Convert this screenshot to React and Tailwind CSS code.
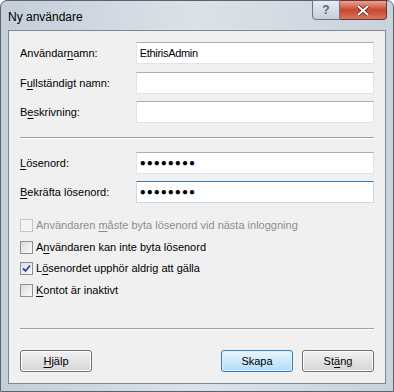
import React from "react";

const font = { fontFamily: '"Liberation Sans", Arial, sans-serif' };

function Label({ pre, u, post }) {
  return (
    <span>
      {pre}
      <span className="underline underline-offset-2">{u}</span>
      {post}
    </span>
  );
}

function TextBox({ value, focused, password }) {
  return (
    <div
      className={`w-[239px] h-[22px] bg-white border flex items-center px-[3px] ${
        focused
          ? "border-[#c5daed] border-t-[#3d7bad]"
          : "border-[#e2e3ea] border-t-[#abadb3]"
      }`}
    >
      {password ? (
        <span className="text-[10px] tracking-[1px] text-black leading-none">●●●●●●●●</span>
      ) : (
        <span className="text-[11px] text-black tracking-[-0.3px]">{value}</span>
      )}
    </div>
  );
}

function FieldRow({ label, className = "", ...rest }) {
  return (
    <div className={`flex items-center h-[22px] ${className}`}>
      <div className="w-[116px] text-[11px] text-black">{label}</div>
      <TextBox {...rest} />
    </div>
  );
}

function Checkbox({ checked, disabled, children, className = "" }) {
  return (
    <div className={`flex items-center h-[13px] ${className}`}>
      <div
        className={`w-[13px] h-[13px] border flex items-center justify-center ${
          disabled ? "border-[#c6c6c6] bg-[#f4f4f4]" : "border-[#8e8f8f] bg-gradient-to-br from-[#dcdcdc] to-[#fbfbfb]"
        }`}
      >
        {checked && (
          <svg width="9" height="9" viewBox="0 0 9 9">
            <path d="M1 4.5 L3.5 7 L8 1.5" fill="none" stroke="#2a4a9a" strokeWidth="1.8" />
          </svg>
        )}
      </div>
      <div className={`ml-[3px] text-[11px] ${disabled ? "text-[#8d8d8d]" : "text-black"}`}>{children}</div>
    </div>
  );
}

function Button({ children, primary }) {
  return (
    <button
      className={`w-[72px] h-[22px] rounded-[3px] border text-[11px] text-black ${
        primary
          ? "border-[#3c7fb1] bg-gradient-to-b from-[#eaf6fd] to-[#b0dcf5] shadow-[inset_0_0_0_1px_#d9f0fc]"
          : "border-[#707070] bg-gradient-to-b from-[#f2f2f2] to-[#d5d5d5] shadow-[inset_0_0_0_1px_#fbfbfb]"
      }`}
    >
      {children}
    </button>
  );
}

export default function App() {
  return (
    <div style={font} className="w-[394px] h-[392px] bg-white">
      <div className="w-[394px] h-[392px] rounded-t-[7px] border border-[#5a6470] bg-gradient-to-r from-[#c3ced9] via-[#dbe2e9] to-[#c8d2dc] flex flex-col">
        {/* title bar */}
        <div className="h-[29px] flex items-start relative">
          <div className="mt-[7px] ml-[7px] text-[12px] text-black">Ny användare</div>
          <div className="ml-auto mr-[6px] flex -mt-px">
            <div className="w-[28px] h-[20px] border border-[#6b7480] rounded-bl-[4px] bg-gradient-to-b from-[#e7ecf1] to-[#c5ced8] flex items-center justify-center text-[12px] font-bold text-[#5b6573]">
              ?
            </div>
            <div className="w-[47px] h-[20px] border border-l-0 border-[#6b3434] rounded-br-[4px] bg-gradient-to-b from-[#e8a393] via-[#c9462d] to-[#d8755e] flex items-center justify-center">
              <svg width="14" height="11" viewBox="0 0 14 11">
                <path d="M2 1 L12 10 M12 1 L2 10" stroke="#4a1a12" strokeWidth="3.2" />
                <path d="M2 1 L12 10 M12 1 L2 10" stroke="#ffffff" strokeWidth="2" />
              </svg>
            </div>
          </div>
        </div>
        {/* client */}
        <div className="mx-[7px] h-[354px] border border-[#7e8893] bg-[#f0f0f0] px-[11px] pt-[11px] flex flex-col">
          <FieldRow label={<Label pre="Användar" u="n" post="amn:" />} value="EthirisAdmin" />
          <FieldRow className="mt-[8px]" label={<Label pre="F" u="u" post="llständigt namn:" />} />
          <FieldRow className="mt-[7px]" label={<Label pre="B" u="e" post="skrivning:" />} />
          <div className="mt-[14px] h-[2px] border-t border-[#a0a0a0] border-b border-b-white" />
          <FieldRow className="mt-[13px]" label={<Label pre="" u="L" post="ösenord:" />} password />
          <FieldRow className="mt-[7px]" label={<Label pre="" u="B" post="ekräfta lösenord:" />} password focused />
          <Checkbox className="mt-[16px]" disabled>
            <Label pre="Användaren " u="m" post="åste byta lösenord vid nästa inloggning" />
          </Checkbox>
          <Checkbox className="mt-[9px]">
            <Label pre="A" u="n" post="vändaren kan inte byta lösenord" />
          </Checkbox>
          <Checkbox className="mt-[8px]" checked>
            <Label pre="L" u="ö" post="senordet upphör aldrig att gälla" />
          </Checkbox>
          <Checkbox className="mt-[9px]">
            <Label pre="" u="K" post="ontot är inaktivt" />
          </Checkbox>
          <div className="mt-[31px] h-[2px] border-t border-[#a0a0a0] border-b border-b-white" />
          <div className="mt-[20px] flex items-center">
            <Button>
              <Label pre="" u="H" post="jälp" />
            </Button>
            <div className="ml-auto flex gap-[9px]">
              <Button primary>Skapa</Button>
              <Button>
                <Label pre="St" u="ä" post="ng" />
              </Button>
            </div>
          </div>
        </div>
      </div>
    </div>
  );
}
